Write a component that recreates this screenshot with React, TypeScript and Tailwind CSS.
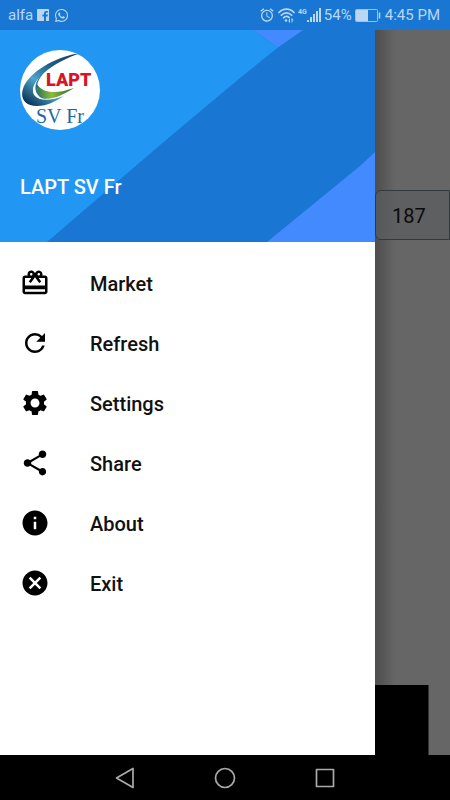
import type { IconType } from 'react-icons';
import {
    MdAlarm,
    MdCancel,
    MdInfo,
    MdRedeem,
    MdRefresh,
    MdSettings,
    MdShare,
} from 'react-icons/md';
import { FaWhatsapp } from 'react-icons/fa6';

type MenuItem = {
    name: string;
    icon: IconType;
};

const menuItems: MenuItem[] = [
    { name: 'Market', icon: MdRedeem },
    { name: 'Refresh', icon: MdRefresh },
    { name: 'Settings', icon: MdSettings },
    { name: 'Share', icon: MdShare },
    { name: 'About', icon: MdInfo },
    { name: 'Exit', icon: MdCancel },
];

function FacebookIcon() {
    return (
        <svg viewBox="0 0 12 12" className="size-3" fill="currentColor">
            <path d="M.7 0H11.300Q12 0 12 .7V11.300Q12 12 11.300 12H9V7.400H10.600L10.900 5.600H9V4.500Q9 3.600 9.900 3.600H11V1.900H9.400Q7 1.900 7 4.300V5.600H5.400V7.400H7V12H.7Q0 12 0 11.300V.7Q0 0 .7 0Z" />
        </svg>
    );
}

function WifiIcon() {
    return (
        <svg viewBox="0 0 17 16" className="w-[17px] h-4" fill="none" stroke="currentColor" strokeLinecap="round">
            <path d="M1 5.5C5 1 12 1 16 5.5" strokeWidth="1.7" />
            <path d="M3.3 8.2C6 5 11 5 13.7 8.2" strokeWidth="1.7" />
            <path d="M5.6 10.8C7.2 9 9.6 9 11 10.4" strokeWidth="1.7" />
            <circle cx="8" cy="13.5" r="1.3" fill="currentColor" stroke="none" />
            <path d="M11.5 12v3M14 12v3M10.8 14l.7 1M14.7 13l-.7-1" strokeWidth="1" />
        </svg>
    );
}

function SignalIcon() {
    return (
        <svg viewBox="0 0 15 14" className="w-[15px] h-3.5" fill="currentColor">
            <rect x="0" y="12" width="2" height="2" />
            <rect x="3" y="9" width="2" height="5" />
            <rect x="6" y="6" width="2" height="8" />
            <rect x="9" y="3" width="2" height="11" />
            <rect x="12" y="0" width="2" height="14" />
        </svg>
    );
}

function BatteryIcon() {
    return (
        <svg viewBox="0 0 26 13" className="w-[26px] h-[13px]" fill="none">
            <rect x="0.5" y="0.5" width="22" height="12" rx="1" stroke="currentColor" strokeOpacity="0.8" />
            <rect x="1" y="1" width="12" height="11" fill="currentColor" />
            <path d="M24.5 3.5v6" stroke="currentColor" strokeWidth="1.5" />
        </svg>
    );
}

function StatusBar() {
    return (
        <header className="h-[30px] shrink-0 flex items-center justify-between bg-[#1976d2] text-[#b9d7f3] pl-2 pr-[10px]">
            <div className="flex items-center">
                <span className="text-[15px] w-[29px]">alfa</span>
                <FacebookIcon />
                <FaWhatsapp className="size-[15px] ml-[5px]" />
            </div>
            <div className="flex items-center">
                <MdAlarm className="size-4" />
                <span className="ml-[3px]"><WifiIcon /></span>
                <span className="ml-[3px] self-start text-[7px] leading-4 font-bold">4G</span>
                <SignalIcon />
                <span className="ml-[2px] w-[31px] text-[15px]">54%</span>
                <BatteryIcon />
                <span className="ml-1 text-[15px]">4:45 PM</span>
            </div>
        </header>
    );
}

function Logo() {
    return (
        <svg viewBox="0 0 80 80" className="size-20" role="img" aria-label="LAPT SV Fr logo">
            <defs>
                <clipPath id="logo-circle">
                    <circle cx="40" cy="40" r="40" />
                </clipPath>
                <linearGradient id="logo-blue" x1="1" y1="0" x2="0.15" y2="1">
                    <stop offset="0" stopColor="#15365f" />
                    <stop offset="0.4" stopColor="#1f5f8c" />
                    <stop offset="0.68" stopColor="#4ba6cd" />
                    <stop offset="1" stopColor="#0c3354" />
                </linearGradient>
                <linearGradient id="logo-green" x1="0" y1="0" x2="1" y2="0">
                    <stop offset="0" stopColor="#2b7a4b" />
                    <stop offset="0.4" stopColor="#8fbb3c" />
                    <stop offset="1" stopColor="#1f5a2a" />
                </linearGradient>
            </defs>
            <g clipPath="url(#logo-circle)">
                <rect width="80" height="80" fill="#fff" />
                <path d="M61 3C38 6 14 19 5 34C-1 45 2 56 17 56C27 56 36 51 44 46C33 50 21 52 15 46C6 36 27 14 61 3Z" fill="url(#logo-blue)" />
                <path d="M30 17C16 27 12 38 18 45C20 48 24 49 28 49C21 47 18 43 17 38C17 30 22 24 30 17Z" fill="#2a6f9c" />
                <path d="M17 34C16 45 23 51 33 48C41 46 47 42 54 38C40 43 23 45 17 34Z" fill="url(#logo-green)" />
                <text x="26" y="36" fontFamily="Roboto, sans-serif" fontSize="18" fontWeight="900" fill="#d81525">LAPT</text>
                <text x="16" y="73" fontFamily="Liberation Serif, serif" fontSize="20" fill="#176aa7">SV Fr</text>
            </g>
        </svg>
    );
}

function DrawerHeader() {
    return (
        <section className="relative h-[212px] bg-[#1976d2]">
            <svg viewBox="0 0 375 212" preserveAspectRatio="none" className="absolute inset-0 size-full">
                <path d="M0 0H253L278 17.5L240 48L166 110L47 212H0Z" fill="#2196f3" />
                <path d="M253 0H303L278 17.5ZM375 122V212H267L360 136Z" fill="#448aff" />
            </svg>
            <div className="relative p-5">
                <Logo />
                <h1 className="mt-[45px] text-xl leading-6 font-medium text-white">LAPT SV Fr</h1>
            </div>
        </section>
    );
}

function Drawer() {
    return (
        <aside className="w-5/6 bg-white">
            <DrawerHeader />
            <nav className="pt-[11px]">
                {menuItems.map(({ name, icon: Icon }) => (
                    <button
                        key={name}
                        className="w-full h-[60px] px-5 flex items-center gap-10 text-left text-xl font-medium text-[#111]"
                    >
                        <Icon className="size-[30px] text-black" />
                        <span className="pt-px">{name}</span>
                    </button>
                ))}
            </nav>
        </aside>
    );
}

// What is left of the screen behind the open drawer
function DimmedPage() {
    return (
        <section className="flex-1 min-w-0 flex flex-col justify-between bg-[#666] bg-linear-to-r from-[#4d4d4d] to-[#666] to-[20px]">
            <input
                aria-label="Value"
                defaultValue="187"
                className="mt-40 w-full h-[50px] pl-4 pt-0.5 rounded-l-md border border-[#33383c] bg-[#5b5d5f]/70 text-xl text-[#0b0b0b] outline-none"
            />
            <div className="h-[70px] mr-[21px] bg-black border-r border-[#333]" />
        </section>
    );
}

function NavigationBar() {
    return (
        <footer className="h-[45px] shrink-0 flex items-center justify-center gap-[76px] bg-black text-[#aaa]">
            <button aria-label="Back">
                <svg viewBox="0 0 24 24" className="size-6" fill="none" stroke="currentColor" strokeWidth="1.7" strokeLinejoin="round">
                    <path d="M3.5 12L20 2.500V21.500Z" />
                </svg>
            </button>
            <button aria-label="Home">
                <svg viewBox="0 0 24 24" className="size-6" fill="none" stroke="currentColor" strokeWidth="1.7">
                    <circle cx="12" cy="12" r="9.5" />
                </svg>
            </button>
            <button aria-label="Recent apps">
                <svg viewBox="0 0 24 24" className="size-6" fill="none" stroke="currentColor" strokeWidth="1.7" strokeLinejoin="round">
                    <rect x="3.5" y="3.5" width="17" height="17" />
                </svg>
            </button>
        </footer>
    );
}

export default function App() {
    return (
        <div className="min-h-screen flex flex-col font-[Roboto,sans-serif]">
            <StatusBar />
            <main className="flex-1 flex">
                <Drawer />
                <DimmedPage />
            </main>
            <NavigationBar />
        </div>
    );
}
